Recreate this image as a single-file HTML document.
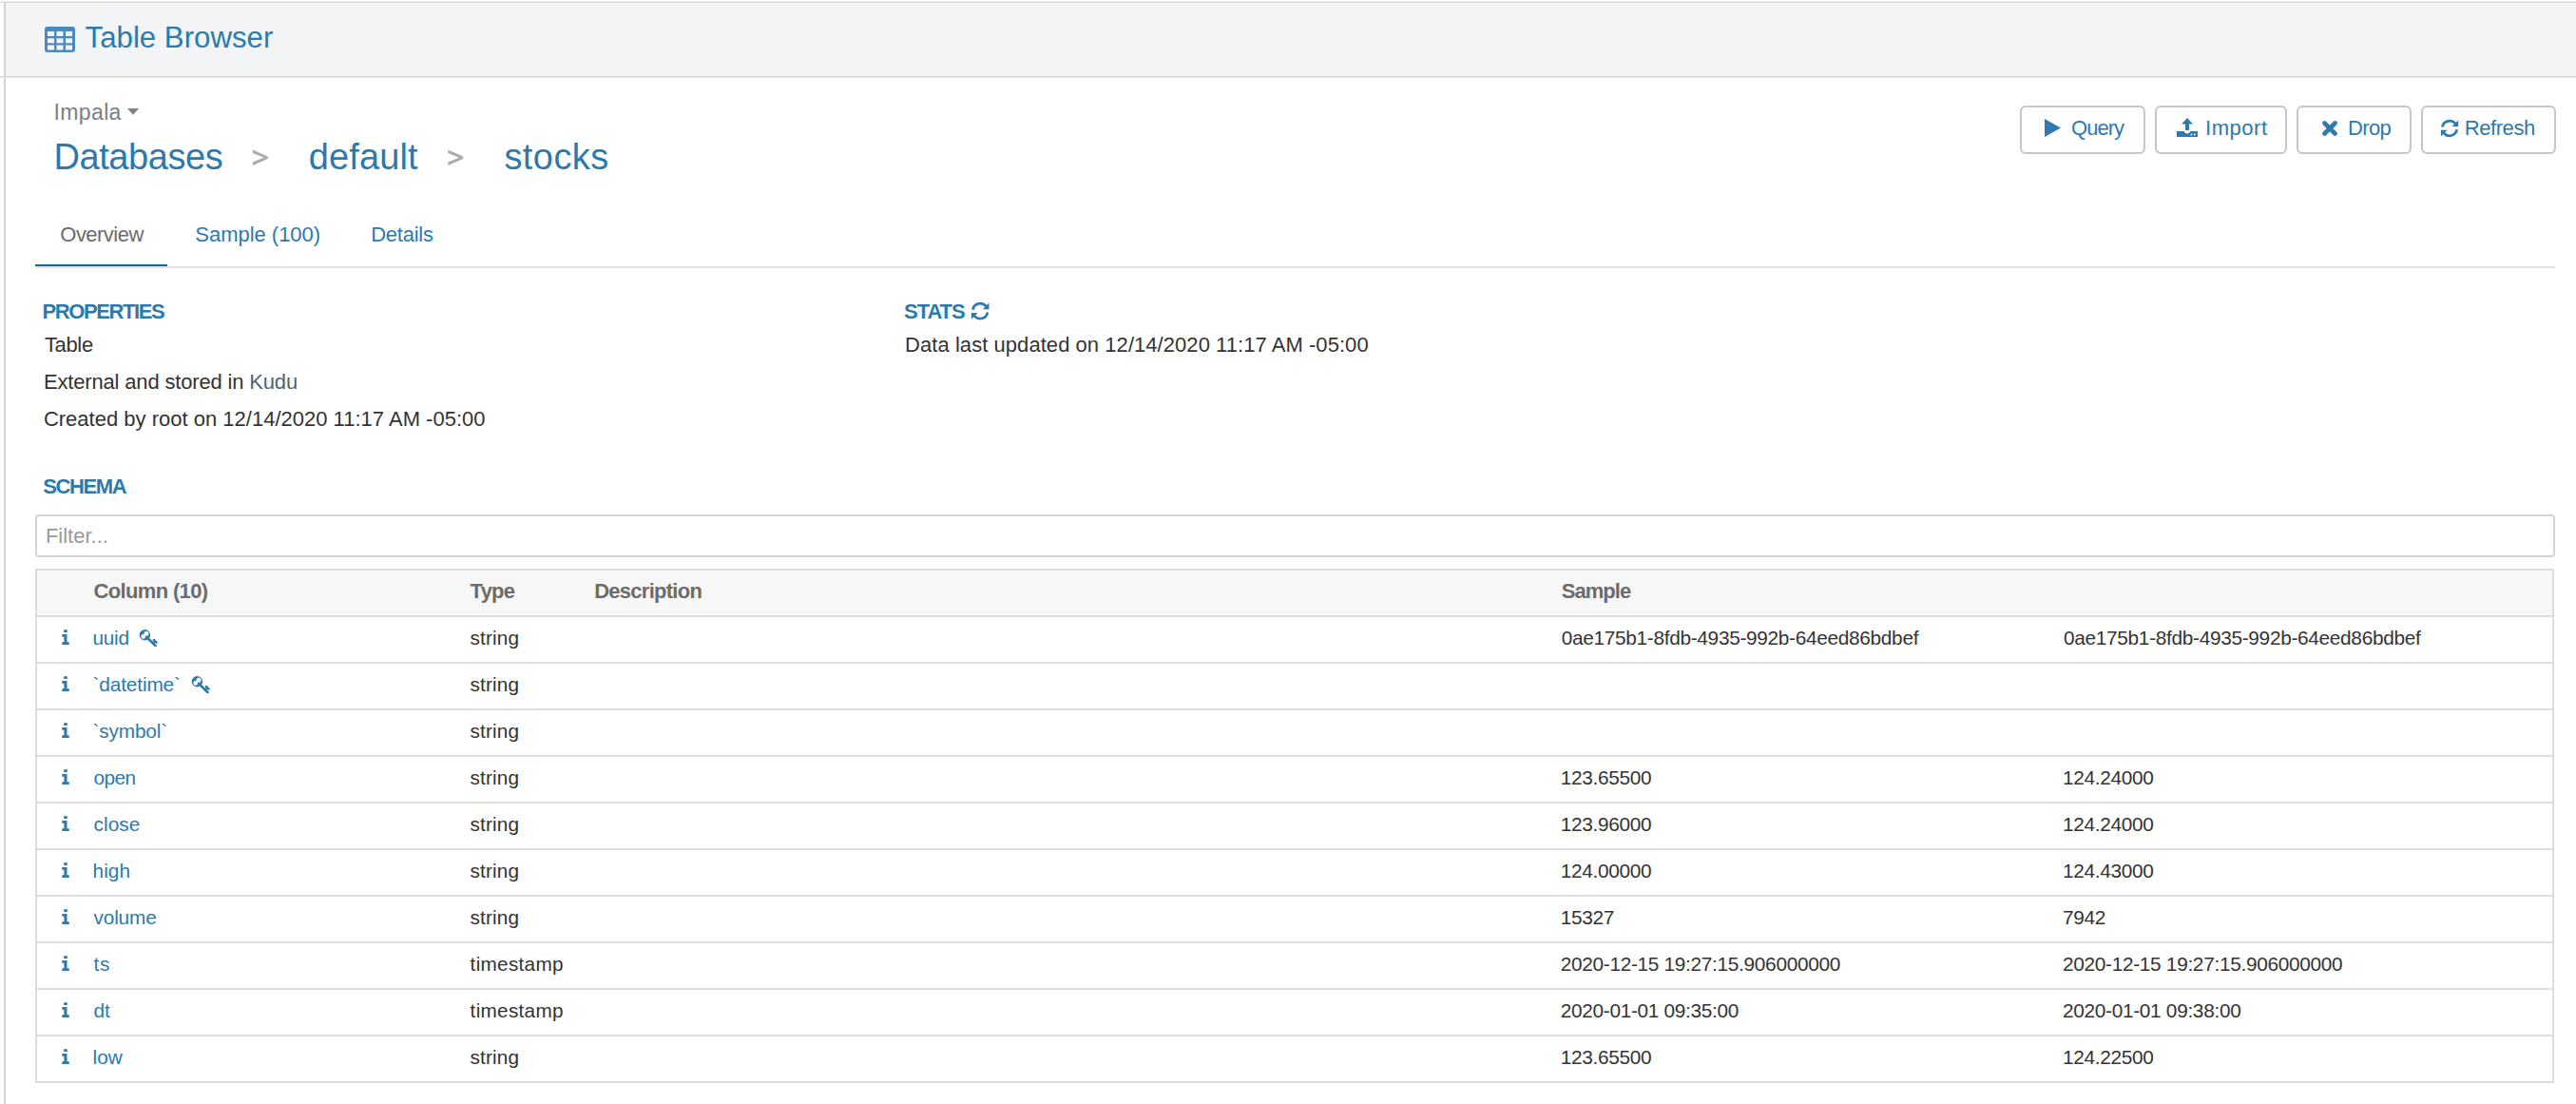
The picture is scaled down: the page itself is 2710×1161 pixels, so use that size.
<!DOCTYPE html>
<html><head><meta charset="utf-8"><title>Table Browser</title>
<style>
html,body{margin:0;padding:0;background:#fff;width:2710px;height:1161px;overflow:hidden;position:relative}
body{font-family:"Liberation Sans",sans-serif;}
.a{position:absolute}
.t{position:absolute;white-space:pre;font-family:"Liberation Sans",sans-serif}
</style></head><body>
<!-- top frame -->
<div class="a" style="left:0;top:1px;width:2710px;height:1px;background:#ebebeb"></div>
<div class="a" style="left:0;top:2px;width:2710px;height:1px;background:#d9d9d9"></div>
<div class="a" style="left:4px;top:3px;width:2px;height:1158px;background:#d2d4d8"></div>
<div class="a" style="left:6px;top:3px;width:2704px;height:77px;background:#f3f4f6"></div>
<div class="a" style="left:0;top:80px;width:2710px;height:1px;background:#d3d5d9"></div>
<div class="a" style="left:0;top:81px;width:2710px;height:1px;background:#e9eaec"></div>
<!-- table icon -->
<svg class="a" style="left:47px;top:28px" width="32" height="27" viewBox="0 0 32 27">
 <rect x="0" y="0" width="32" height="27" rx="3" fill="#4b89bf"/>
 <g fill="#f3f4f6">
  <rect x="3" y="5" width="7" height="5"/><rect x="12.5" y="5" width="7" height="5"/><rect x="22" y="5" width="7" height="5"/>
  <rect x="3" y="12.3" width="7" height="5"/><rect x="12.5" y="12.3" width="7" height="5"/><rect x="22" y="12.3" width="7" height="5"/>
  <rect x="3" y="19.5" width="7" height="5"/><rect x="12.5" y="19.5" width="7" height="5"/><rect x="22" y="19.5" width="7" height="5"/>
 </g>
</svg>
<!-- impala caret -->
<svg class="a" style="left:0;top:0" width="160" height="200" viewBox="0 0 160 200"><path d="M133.9 114H146.2L140 120.8z" fill="#7c828a"/></svg>
<!-- breadcrumb separators -->
<svg class="a" style="left:0;top:0" width="500" height="200" viewBox="0 0 500 200"><g fill="#a9adb1"><path d="M265.9 157.5L281.8 164.6V167L265.9 174V170.4L277.3 165.8L265.9 161z"/><path transform="translate(205.5,0)" d="M265.9 157.5L281.8 164.6V167L265.9 174V170.4L277.3 165.8L265.9 161z"/></g></svg>
<!-- buttons -->
<div class="a" style="left:2125px;top:111px;width:128px;height:47px;border:2px solid #c6c6c6;border-radius:6px"></div>
<div class="a" style="left:2267px;top:111px;width:135px;height:47px;border:2px solid #c6c6c6;border-radius:6px"></div>
<div class="a" style="left:2416px;top:111px;width:117px;height:47px;border:2px solid #c6c6c6;border-radius:6px"></div>
<div class="a" style="left:2547px;top:111px;width:138px;height:47px;border:2px solid #c6c6c6;border-radius:6px"></div>
<svg class="a" style="left:2151px;top:125px" width="17" height="19" viewBox="0 0 17 19"><path d="M0 0L17 9.5L0 19z" fill="#2f79ab"/></svg>
<svg class="a" style="left:2290px;top:124px" width="22" height="20" viewBox="0 0 22 20"><path fill="#2f79ab" d="M11 0l6 6.5h-4v6.5h-4V6.5H5z M0 14h7.5c0.8 1.6 2 2.5 3.5 2.5s2.7-0.9 3.5-2.5H22v6H0z"/><circle cx="15.5" cy="17.5" r="0.9" fill="#fff"/><circle cx="18.8" cy="17.5" r="0.9" fill="#fff"/></svg>
<svg class="a" style="left:2443px;top:127px" width="16" height="16" viewBox="0 0 16 16"><path d="M2.5 2.5L13.5 13.5M13.5 2.5L2.5 13.5" stroke="#2f79ab" stroke-width="4.6" stroke-linecap="round"/></svg>
<svg class="a" style="left:2567px;top:124.5px" width="20" height="20" viewBox="5 6.5 20 20"><g fill="none" stroke="#2f79ab" stroke-width="2.7"><path d="M7.4 15.1A7.8 7.8 0 0 1 21.2 11.6"/><path d="M22.7 17.8A7.8 7.8 0 0 1 8.9 21.3"/></g><path fill="#2f79ab" d="M24.2 8V14.6H17.6z M5.9 24.9V18.3H12.5z"/></svg>
<!-- tabs -->
<div class="a" style="left:37px;top:280px;width:2651px;height:2px;background:#e0e1e3"></div>
<div class="a" style="left:37px;top:278px;width:139px;height:2px;background:#0c6aa3"></div>
<!-- stats refresh icon -->
<svg class="a" style="left:1021px;top:317px" width="20.3" height="20.3" viewBox="5 6.5 20 20"><g fill="none" stroke="#2f79ab" stroke-width="2.7"><path d="M7.4 15.1A7.8 7.8 0 0 1 21.2 11.6"/><path d="M22.7 17.8A7.8 7.8 0 0 1 8.9 21.3"/></g><path fill="#2f79ab" d="M24.2 8V14.6H17.6z M5.9 24.9V18.3H12.5z"/></svg>
<!-- filter input -->
<div class="a" style="left:37px;top:541px;width:2647px;height:41px;border:2px solid #d0d4d9;border-radius:4px;background:#fff"></div>
<!-- schema table -->
<div class="a" style="left:37px;top:598px;width:2646px;height:537px;border:2px solid #dcdcdc;background:#fff"></div>
<div class="a" style="left:39px;top:600px;width:2646px;height:47px;background:#f7f7f7"></div>
<div class="a" style="left:39px;top:647px;width:2646px;height:2px;background:#dcdcdc"></div>
<div class="a" style="left:39px;top:696px;width:2646px;height:2px;background:#dedede"></div>
<div class="a" style="left:39px;top:745px;width:2646px;height:2px;background:#dedede"></div>
<div class="a" style="left:39px;top:794px;width:2646px;height:2px;background:#dedede"></div>
<div class="a" style="left:39px;top:843px;width:2646px;height:2px;background:#dedede"></div>
<div class="a" style="left:39px;top:892px;width:2646px;height:2px;background:#dedede"></div>
<div class="a" style="left:39px;top:941px;width:2646px;height:2px;background:#dedede"></div>
<div class="a" style="left:39px;top:990px;width:2646px;height:2px;background:#dedede"></div>
<div class="a" style="left:39px;top:1039px;width:2646px;height:2px;background:#dedede"></div>
<div class="a" style="left:39px;top:1088px;width:2646px;height:2px;background:#dedede"></div>
<svg class="a" style="left:65px;top:662px" width="8" height="16" viewBox="0 0 8 16"><path fill="#2f79ab" d="M2.2 0.3h3.6v2.8H2.2z M0.3 5h5.2v8.2h2.2v2.7H0.3v-2.7h2.1V7.7H0.3z"/></svg>
<svg class="a" style="left:146px;top:662px" width="20" height="18" viewBox="0 0 20 18"><circle cx="6.4" cy="5.8" r="5.7" fill="#2f79ab"/><circle cx="4.7" cy="7.4" r="2.3" fill="#fff"/><circle cx="8" cy="4.3" r="2.5" fill="#fff"/><g stroke="#2f79ab" stroke-linecap="round" fill="none"><path d="M10.3 10L17.6 17.2" stroke-width="2.5"/><path d="M15.9 10.9L18.6 13.6M14.9 14.5L17 12.5" stroke-width="2.3"/></g></svg>
<svg class="a" style="left:65px;top:711px" width="8" height="16" viewBox="0 0 8 16"><path fill="#2f79ab" d="M2.2 0.3h3.6v2.8H2.2z M0.3 5h5.2v8.2h2.2v2.7H0.3v-2.7h2.1V7.7H0.3z"/></svg>
<svg class="a" style="left:201px;top:711px" width="20" height="18" viewBox="0 0 20 18"><circle cx="6.4" cy="5.8" r="5.7" fill="#2f79ab"/><circle cx="4.7" cy="7.4" r="2.3" fill="#fff"/><circle cx="8" cy="4.3" r="2.5" fill="#fff"/><g stroke="#2f79ab" stroke-linecap="round" fill="none"><path d="M10.3 10L17.6 17.2" stroke-width="2.5"/><path d="M15.9 10.9L18.6 13.6M14.9 14.5L17 12.5" stroke-width="2.3"/></g></svg>
<svg class="a" style="left:65px;top:760px" width="8" height="16" viewBox="0 0 8 16"><path fill="#2f79ab" d="M2.2 0.3h3.6v2.8H2.2z M0.3 5h5.2v8.2h2.2v2.7H0.3v-2.7h2.1V7.7H0.3z"/></svg>
<svg class="a" style="left:65px;top:809px" width="8" height="16" viewBox="0 0 8 16"><path fill="#2f79ab" d="M2.2 0.3h3.6v2.8H2.2z M0.3 5h5.2v8.2h2.2v2.7H0.3v-2.7h2.1V7.7H0.3z"/></svg>
<svg class="a" style="left:65px;top:858px" width="8" height="16" viewBox="0 0 8 16"><path fill="#2f79ab" d="M2.2 0.3h3.6v2.8H2.2z M0.3 5h5.2v8.2h2.2v2.7H0.3v-2.7h2.1V7.7H0.3z"/></svg>
<svg class="a" style="left:65px;top:907px" width="8" height="16" viewBox="0 0 8 16"><path fill="#2f79ab" d="M2.2 0.3h3.6v2.8H2.2z M0.3 5h5.2v8.2h2.2v2.7H0.3v-2.7h2.1V7.7H0.3z"/></svg>
<svg class="a" style="left:65px;top:956px" width="8" height="16" viewBox="0 0 8 16"><path fill="#2f79ab" d="M2.2 0.3h3.6v2.8H2.2z M0.3 5h5.2v8.2h2.2v2.7H0.3v-2.7h2.1V7.7H0.3z"/></svg>
<svg class="a" style="left:65px;top:1005px" width="8" height="16" viewBox="0 0 8 16"><path fill="#2f79ab" d="M2.2 0.3h3.6v2.8H2.2z M0.3 5h5.2v8.2h2.2v2.7H0.3v-2.7h2.1V7.7H0.3z"/></svg>
<svg class="a" style="left:65px;top:1054px" width="8" height="16" viewBox="0 0 8 16"><path fill="#2f79ab" d="M2.2 0.3h3.6v2.8H2.2z M0.3 5h5.2v8.2h2.2v2.7H0.3v-2.7h2.1V7.7H0.3z"/></svg>
<svg class="a" style="left:65px;top:1103px" width="8" height="16" viewBox="0 0 8 16"><path fill="#2f79ab" d="M2.2 0.3h3.6v2.8H2.2z M0.3 5h5.2v8.2h2.2v2.7H0.3v-2.7h2.1V7.7H0.3z"/></svg>
<!-- texts -->
<div class="t" style="left:89.6px;top:24.28px;font-size:31.21px;line-height:31.21px;color:#2c7aad;">Table Browser</div>
<div class="t" style="left:56.6px;top:106.83px;font-size:23px;line-height:23px;color:#7b7f84;letter-spacing:0.352px;">Impala</div>
<div class="t" style="left:56.4px;top:146.33px;font-size:38px;line-height:38px;color:#2c7aad;letter-spacing:-0.409px;">Databases</div>
<div class="t" style="left:324.7px;top:146.33px;font-size:38px;line-height:38px;color:#2c7aad;letter-spacing:0.127px;">default</div>
<div class="t" style="left:530.4px;top:146.33px;font-size:38px;line-height:38px;color:#2c7aad;letter-spacing:0.442px;">stocks</div>
<div class="t" style="left:2179px;top:123.88px;font-size:22px;line-height:22px;color:#2c7aad;letter-spacing:-0.977px;">Query</div>
<div class="t" style="left:2320px;top:123.88px;font-size:22px;line-height:22px;color:#2c7aad;letter-spacing:0.553px;">Import</div>
<div class="t" style="left:2470px;top:123.88px;font-size:22px;line-height:22px;color:#2c7aad;letter-spacing:-0.616px;">Drop</div>
<div class="t" style="left:2592.7px;top:123.88px;font-size:22px;line-height:22px;color:#2c7aad;letter-spacing:-0.416px;">Refresh</div>
<div class="t" style="left:63.3px;top:236.48px;font-size:22px;line-height:22px;color:#6b6b6b;letter-spacing:-0.528px;">Overview</div>
<div class="t" style="left:205.3px;top:236.48px;font-size:22px;line-height:22px;color:#2c7aad;letter-spacing:-0.022px;">Sample (100)</div>
<div class="t" style="left:390.2px;top:236.48px;font-size:22px;line-height:22px;color:#2c7aad;letter-spacing:-0.241px;">Details</div>
<div class="t" style="left:44.4px;top:317.38px;font-size:22px;line-height:22px;color:#2c7aad;font-weight:700;letter-spacing:-1.393px;">PROPERTIES</div>
<div class="t" style="left:46.9px;top:352.38px;font-size:22px;line-height:22px;color:#333333;letter-spacing:-0.34px;">Table</div>
<div class="t" style="left:45.9px;top:391.38px;font-size:22px;line-height:22px;color:#333333;letter-spacing:-0.164px;">External and stored in <span style="color:#4f6272">Kudu</span></div>
<div class="t" style="left:45.9px;top:430.38px;font-size:22px;line-height:22px;color:#333333;letter-spacing:0.006px;">Created by root on 12/14/2020 11:17 AM -05:00</div>
<div class="t" style="left:951.1px;top:317.38px;font-size:22px;line-height:22px;color:#2c7aad;font-weight:700;letter-spacing:-1.068px;">STATS</div>
<div class="t" style="left:952.1px;top:351.98px;font-size:22px;line-height:22px;color:#333333;letter-spacing:0.051px;">Data last updated on 12/14/2020 11:17 AM -05:00</div>
<div class="t" style="left:45.3px;top:501.38px;font-size:22px;line-height:22px;color:#2c7aad;font-weight:700;letter-spacing:-1.41px;">SCHEMA</div>
<div class="t" style="left:47.9px;top:552.68px;font-size:22px;line-height:22px;color:#9a9a9a;">Filter...</div>
<div class="t" style="left:98.4px;top:611.48px;font-size:22px;line-height:22px;color:#6c6c6c;font-weight:700;letter-spacing:-0.639px;">Column (10)</div>
<div class="t" style="left:494.6px;top:611.48px;font-size:22px;line-height:22px;color:#6c6c6c;font-weight:700;letter-spacing:-0.76px;">Type</div>
<div class="t" style="left:625.2px;top:611.48px;font-size:22px;line-height:22px;color:#6c6c6c;font-weight:700;letter-spacing:-0.738px;">Description</div>
<div class="t" style="left:1642.7px;top:611.48px;font-size:22px;line-height:22px;color:#6c6c6c;font-weight:700;letter-spacing:-0.944px;">Sample</div>
<div class="t" style="left:97.5px;top:661.39px;font-size:20.8px;line-height:20.8px;color:#2c7aad;letter-spacing:-0.284px;">uuid</div>
<div class="t" style="left:494.6px;top:661.39px;font-size:20.8px;line-height:20.8px;color:#333333;letter-spacing:0.122px;">string</div>
<div class="t" style="left:1642.7px;top:661.39px;font-size:20.8px;line-height:20.8px;color:#333333;letter-spacing:-0.3px;">0ae175b1-8fdb-4935-992b-64eed86bdbef</div>
<div class="t" style="left:2171px;top:661.39px;font-size:20.8px;line-height:20.8px;color:#333333;letter-spacing:-0.3px;">0ae175b1-8fdb-4935-992b-64eed86bdbef</div>
<div class="t" style="left:97.5px;top:710.39px;font-size:20.8px;line-height:20.8px;color:#2c7aad;letter-spacing:-0.132px;">`datetime`</div>
<div class="t" style="left:494.6px;top:710.39px;font-size:20.8px;line-height:20.8px;color:#333333;letter-spacing:0.122px;">string</div>
<div class="t" style="left:97.5px;top:759.39px;font-size:20.8px;line-height:20.8px;color:#2c7aad;letter-spacing:-0.157px;">`symbol`</div>
<div class="t" style="left:494.6px;top:759.39px;font-size:20.8px;line-height:20.8px;color:#333333;letter-spacing:0.122px;">string</div>
<div class="t" style="left:98.5px;top:808.39px;font-size:20.8px;line-height:20.8px;color:#2c7aad;letter-spacing:-0.566px;">open</div>
<div class="t" style="left:494.6px;top:808.39px;font-size:20.8px;line-height:20.8px;color:#333333;letter-spacing:0.122px;">string</div>
<div class="t" style="left:1641.7px;top:808.39px;font-size:20.8px;line-height:20.8px;color:#333333;letter-spacing:-0.3px;">123.65500</div>
<div class="t" style="left:2170px;top:808.39px;font-size:20.8px;line-height:20.8px;color:#333333;letter-spacing:-0.3px;">124.24000</div>
<div class="t" style="left:98.5px;top:857.39px;font-size:20.8px;line-height:20.8px;color:#2c7aad;letter-spacing:0.054px;">close</div>
<div class="t" style="left:494.6px;top:857.39px;font-size:20.8px;line-height:20.8px;color:#333333;letter-spacing:0.122px;">string</div>
<div class="t" style="left:1641.7px;top:857.39px;font-size:20.8px;line-height:20.8px;color:#333333;letter-spacing:-0.3px;">123.96000</div>
<div class="t" style="left:2170px;top:857.39px;font-size:20.8px;line-height:20.8px;color:#333333;letter-spacing:-0.3px;">124.24000</div>
<div class="t" style="left:97.5px;top:906.39px;font-size:20.8px;line-height:20.8px;color:#2c7aad;letter-spacing:0.082px;">high</div>
<div class="t" style="left:494.6px;top:906.39px;font-size:20.8px;line-height:20.8px;color:#333333;letter-spacing:0.122px;">string</div>
<div class="t" style="left:1641.7px;top:906.39px;font-size:20.8px;line-height:20.8px;color:#333333;letter-spacing:-0.3px;">124.00000</div>
<div class="t" style="left:2170px;top:906.39px;font-size:20.8px;line-height:20.8px;color:#333333;letter-spacing:-0.3px;">124.43000</div>
<div class="t" style="left:98.5px;top:955.39px;font-size:20.8px;line-height:20.8px;color:#2c7aad;letter-spacing:-0.155px;">volume</div>
<div class="t" style="left:494.6px;top:955.39px;font-size:20.8px;line-height:20.8px;color:#333333;letter-spacing:0.122px;">string</div>
<div class="t" style="left:1641.7px;top:955.39px;font-size:20.8px;line-height:20.8px;color:#333333;letter-spacing:-0.3px;">15327</div>
<div class="t" style="left:2170px;top:955.39px;font-size:20.8px;line-height:20.8px;color:#333333;letter-spacing:-0.3px;">7942</div>
<div class="t" style="left:98.5px;top:1004.39px;font-size:20.8px;line-height:20.8px;color:#2c7aad;letter-spacing:0.722px;">ts</div>
<div class="t" style="left:494.6px;top:1004.39px;font-size:20.8px;line-height:20.8px;color:#333333;letter-spacing:0.256px;">timestamp</div>
<div class="t" style="left:1641.7px;top:1004.39px;font-size:20.8px;line-height:20.8px;color:#333333;letter-spacing:-0.3px;">2020-12-15 19:27:15.906000000</div>
<div class="t" style="left:2170px;top:1004.39px;font-size:20.8px;line-height:20.8px;color:#333333;letter-spacing:-0.3px;">2020-12-15 19:27:15.906000000</div>
<div class="t" style="left:98.5px;top:1053.39px;font-size:20.8px;line-height:20.8px;color:#2c7aad;letter-spacing:-0.066px;">dt</div>
<div class="t" style="left:494.6px;top:1053.39px;font-size:20.8px;line-height:20.8px;color:#333333;letter-spacing:0.256px;">timestamp</div>
<div class="t" style="left:1641.7px;top:1053.39px;font-size:20.8px;line-height:20.8px;color:#333333;letter-spacing:-0.3px;">2020-01-01 09:35:00</div>
<div class="t" style="left:2170px;top:1053.39px;font-size:20.8px;line-height:20.8px;color:#333333;letter-spacing:-0.3px;">2020-01-01 09:38:00</div>
<div class="t" style="left:97.5px;top:1102.39px;font-size:20.8px;line-height:20.8px;color:#2c7aad;letter-spacing:0.057px;">low</div>
<div class="t" style="left:494.6px;top:1102.39px;font-size:20.8px;line-height:20.8px;color:#333333;letter-spacing:0.122px;">string</div>
<div class="t" style="left:1641.7px;top:1102.39px;font-size:20.8px;line-height:20.8px;color:#333333;letter-spacing:-0.3px;">123.65500</div>
<div class="t" style="left:2170px;top:1102.39px;font-size:20.8px;line-height:20.8px;color:#333333;letter-spacing:-0.3px;">124.22500</div>
</body></html>
